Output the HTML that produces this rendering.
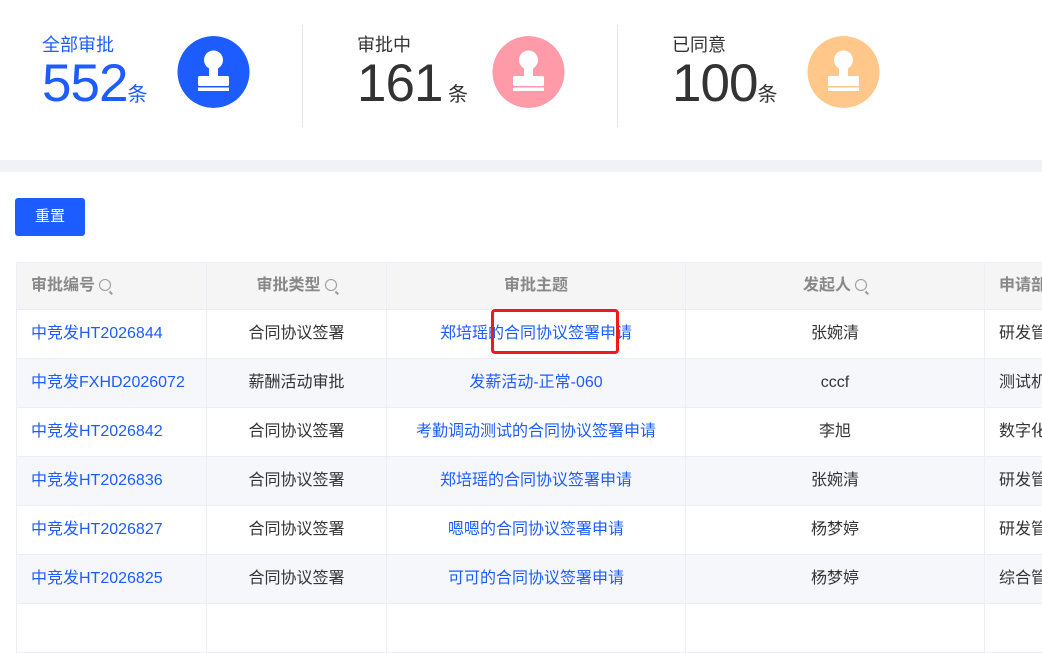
<!DOCTYPE html><html><head><meta charset="utf-8"><style>
*{margin:0;padding:0;box-sizing:border-box}
body{width:1042px;height:610px;overflow:hidden;background:#fff;font-family:"Liberation Sans","Noto Sans CJK SC",sans-serif;position:relative}
.lbl{font-size:18px;position:absolute;top:0;white-space:nowrap}
.num{font-size:53px;position:absolute;top:22px;white-space:nowrap;letter-spacing:-1px}
.num span{font-size:20px;letter-spacing:0}
.circ{position:absolute;width:73px;height:72px;border-radius:50%}
.div{position:absolute;top:25px;width:1px;height:102px;background:#e5e5e5}
.gray{position:absolute;top:160px;left:0;width:1042px;height:12px;background:#f0f2f5}
.btn{position:absolute;left:15px;top:198px;width:70px;height:38px;background:#1d5cff;color:#fff;border-radius:3px;font-size:15px;text-align:center;line-height:38px}
table{position:absolute;left:16px;top:262px;border-collapse:collapse;font-size:16px;table-layout:fixed;width:1100px}
td,th{border:1px solid #ebeef5;height:49px;text-align:center;white-space:nowrap;overflow:hidden;color:#333;font-weight:normal;line-height:20px}
th{background:#f5f5f5;color:#888;font-weight:bold;height:47px}
tr:nth-child(odd) td{background:#f5f7fa}
td.l,th.l{text-align:left;padding-left:14px}
.b{color:#1d5cff}
.q{display:inline-block;width:12px;height:12px;border:1.5px solid #999;border-radius:50%;margin-left:4px;vertical-align:-1px;position:relative}
.q:after{content:"";position:absolute;right:-3px;bottom:-3px;width:4px;height:1.5px;background:#999;transform:rotate(45deg)}
.box{position:absolute;left:491px;top:309px;width:128px;height:45px;border:3px solid #f01a1a;border-radius:4px}
</style></head><body>
<svg width="0" height="0" style="position:absolute"><defs><g id="st"><circle cx="0" cy="-12" r="9.5" fill="#fff"/><rect x="-4.5" y="-6" width="9" height="10" fill="#fff"/><rect x="-15.5" y="4" width="31" height="10" rx="1.5" fill="#fff"/><rect x="-15.5" y="15.5" width="31" height="3.5" fill="#fff"/></g></defs></svg>
<div class="lbl" style="left:42px;top:31px;color:#1d5cff">全部审批</div>
<div class="num" style="left:42px;top:53px;color:#1d5cff">552<span>条</span></div>
<svg class="circ" style="left:177px;top:36px" viewBox="-36 -36 72 72"><circle r="36" fill="#1d5cff"/><use href="#st"/></svg>
<div class="div" style="left:302px"></div>
<div class="lbl" style="left:357px;top:31px;color:#333">审批中</div>
<div class="num" style="left:357px;top:53px;color:#333">161<span> 条</span></div>
<svg class="circ" style="left:492px;top:36px" viewBox="-36 -36 72 72"><circle r="36" fill="#ff9aa8"/><use href="#st"/></svg>
<div class="div" style="left:617px"></div>
<div class="lbl" style="left:672px;top:31px;color:#333">已同意</div>
<div class="num" style="left:672px;top:53px;color:#333">100<span>条</span></div>
<svg class="circ" style="left:807px;top:36px" viewBox="-36 -36 72 72"><circle r="36" fill="#ffc88a"/><use href="#st"/></svg>
<div class="gray"></div>
<div class="btn">重置</div>
<table>
<colgroup><col style="width:190px"><col style="width:180px"><col style="width:299px"><col style="width:299px"><col style="width:132px"></colgroup>
<tr><th class="l">审批编号<i class="q"></i></th><th>审批类型<i class="q"></i></th><th>审批主题</th><th>发起人<i class="q"></i></th><th class="l">申请部门</th></tr>
<tr><td class="l b">中竞发HT2026844</td><td>合同协议签署</td><td class="b">郑培瑶的合同协议签署申请</td><td>张婉清</td><td class="l">研发管理</td></tr>
<tr><td class="l b">中竞发FXHD2026072</td><td>薪酬活动审批</td><td class="b">发薪活动-正常-060</td><td>cccf</td><td class="l">测试机构</td></tr>
<tr><td class="l b">中竞发HT2026842</td><td>合同协议签署</td><td class="b">考勤调动测试的合同协议签署申请</td><td>李旭</td><td class="l">数字化部</td></tr>
<tr><td class="l b">中竞发HT2026836</td><td>合同协议签署</td><td class="b">郑培瑶的合同协议签署申请</td><td>张婉清</td><td class="l">研发管理</td></tr>
<tr><td class="l b">中竞发HT2026827</td><td>合同协议签署</td><td class="b">嗯嗯的合同协议签署申请</td><td>杨梦婷</td><td class="l">研发管理</td></tr>
<tr><td class="l b">中竞发HT2026825</td><td>合同协议签署</td><td class="b">可可的合同协议签署申请</td><td>杨梦婷</td><td class="l">综合管理</td></tr>
<tr><td></td><td></td><td></td><td></td><td></td></tr>
</table>
<div class="box"></div>
</body></html>
